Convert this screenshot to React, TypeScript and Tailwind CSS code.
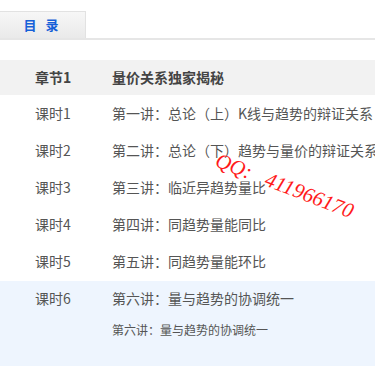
const lessons = [
  { no: '课时1', title: '第一讲：总论（上）K线与趋势的辩证关系' },
  { no: '课时2', title: '第二讲：总论（下）趋势与量价的辩证关系' },
  { no: '课时3', title: '第三讲：临近异趋势量比' },
  { no: '课时4', title: '第四讲：同趋势量能同比' },
  { no: '课时5', title: '第五讲：同趋势量能环比' },
];

export default function App() {
  return (
    <div
      className="relative w-[375px] h-[378px] overflow-hidden bg-white text-[#555]"
      style={{ fontFamily: '"Noto Sans CJK SC", "Liberation Sans", sans-serif' }}
    >
      <div className="pt-[11px] border-b-2 border-[#e6e6e6] flex">
        <div className="w-[86px] h-[27px] flex items-center justify-center bg-gradient-to-b from-[#f7f7f7] to-[#eaeaea] border-t border-r border-[#e2e2e2] text-[13px] font-bold text-[#1560d8] tracking-[3px]">
          目 录
        </div>
      </div>

      <div className="mt-5 h-[35px] bg-[#f2f2f2] flex items-center text-[14px] font-bold text-[#444]">
        <span className="w-[112px] pl-[35px]">章节1</span>
        <span>量价关系独家揭秘</span>
      </div>

      <div>
        {lessons.map((l) => (
          <div key={l.no} className="h-[37px] flex items-center text-[14px] whitespace-nowrap">
            <span className="w-[112px] shrink-0 pl-[35px]">{l.no}</span>
            <span>{l.title}</span>
          </div>
        ))}
      </div>

      <div className="mt-[1px] h-[85px] bg-[#eef5fe] whitespace-nowrap">
        <div className="h-[34px] flex items-center text-[14px]">
          <span className="w-[112px] shrink-0 pl-[35px]">课时6</span>
          <span>第六讲：量与趋势的协调统一</span>
        </div>
        <div className="pl-[112px] text-[12px] leading-[30px]">第六讲：量与趋势的协调统一</div>
      </div>

      <div
        className="absolute left-[220px] top-[150px] text-[#ff1a1a] italic text-[21px] leading-none whitespace-nowrap origin-top-left rotate-[21deg]"
        style={{ fontFamily: '"Liberation Serif", serif' }}
      >
        QQ:&nbsp;&nbsp;&nbsp;411966170
      </div>
    </div>
  );
}
